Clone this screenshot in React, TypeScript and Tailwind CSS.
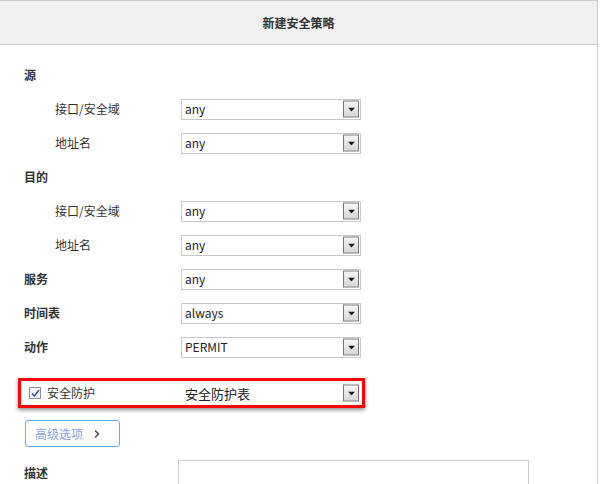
import { ChevronRight } from 'lucide-react';

const font = { fontFamily: '"Microsoft YaHei", "Noto Sans CJK SC", "Noto Sans", sans-serif' };

function Select({ value, big = false }: { value: string; big?: boolean }) {
    return (
        <div
            className={`relative flex items-center w-[180px] bg-white border border-[#c8c8c8] pl-[3px] ${big ? 'h-[24px] text-[13px] border-white' : 'h-[21px] text-[12px]'} text-[#222]`}
        >
            <span className="leading-none">{value}</span>
            <div className="absolute right-[1px] top-1/2 -translate-y-1/2 w-[16px] h-[17px] border border-[#777] bg-gradient-to-b from-[#f6f6f6] to-[#d6d6d6] flex items-center justify-center">
                <svg width="7" height="4" viewBox="0 0 7 4">
                    <path d="M0 0h7L3.5 4z" fill="#111" />
                </svg>
            </div>
        </div>
    );
}

function Row({ label, sub = false, value }: { label: string; sub?: boolean; value?: string }) {
    return (
        <div className="flex items-center h-[34px]">
            <div
                className={`w-[157px] text-[12px] text-[#333] ${sub ? 'pl-[31px] font-normal' : 'font-bold'}`}
            >
                {label}
            </div>
            {value && <Select value={value} />}
        </div>
    );
}

export default function App() {
    return (
        <div className="w-[598px] h-[484px] overflow-hidden border-t border-r border-[#cccccc] bg-white" style={font}>
            <div className="h-[44px] bg-[#f0f0f0] border-b border-[#cccccc] flex items-center justify-center">
                <span className="text-[12px] font-bold text-[#333]">新建安全策略</span>
            </div>

            <div className="pl-[24px] pt-[13px]">
                <Row label="源" />
                <Row label="接口/安全域" sub value="any" />
                <Row label="地址名" sub value="any" />
                <Row label="目的" />
                <Row label="接口/安全域" sub value="any" />
                <Row label="地址名" sub value="any" />
                <Row label="服务" value="any" />
                <Row label="时间表" value="always" />
                <Row label="动作" value="PERMIT" />

                <div className="-ml-[6px] mt-[14px] w-[347px] h-[30px] border-[3px] border-[#ff0000] shadow-[0_2px_4px_rgba(0,0,0,0.45)] flex items-center">
                    <div className="w-[160px] flex items-center pl-[8px] gap-[6px]">
                        <div className="w-[12px] h-[12px] border border-[#8f8f9f] bg-[#f4f4f8] flex items-center justify-center">
                            <svg width="9" height="9" viewBox="0 0 9 9">
                                <path d="M1 4.5l2.3 2.6L8 1" stroke="#4a5a9a" strokeWidth="1.6" fill="none" />
                            </svg>
                        </div>
                        <span className="text-[12px] text-[#333]">安全防护</span>
                    </div>
                    <Select value="安全防护表" big />
                </div>

                <button className="mt-[12px] ml-[1px] w-[95px] h-[27px] rounded-[3px] border border-[#6aaaea] bg-white flex items-center pl-[9px] gap-[8px]">
                    <span className="text-[12px] text-[#86a2dc]">高级选项</span>
                    <ChevronRight size={12} strokeWidth={3} color="#444" />
                </button>

                <div className="flex items-start mt-[13px]">
                    <div className="w-[154px] pt-[4px] text-[12px] font-bold text-[#333]">描述</div>
                    <div className="w-[351px] h-[60px] border border-[#cccccc]" />
                </div>
            </div>
        </div>
    );
}
